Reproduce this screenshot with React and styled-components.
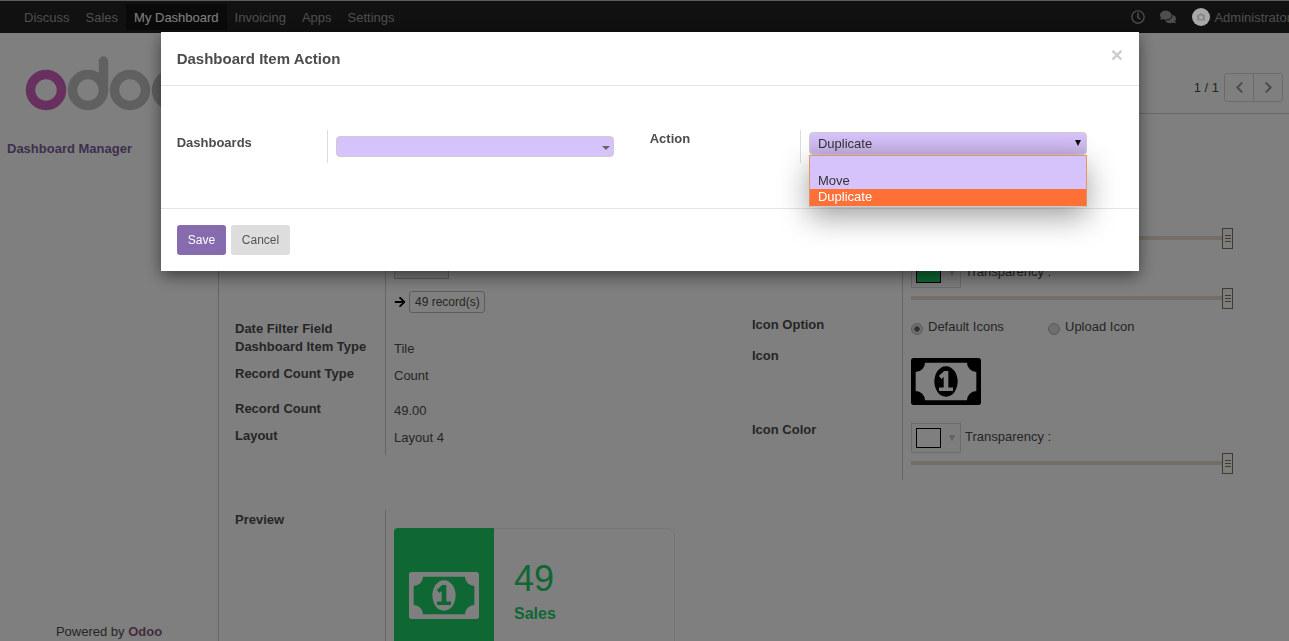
import styled, { createGlobalStyle } from "styled-components"
import { FaArrowRight, FaChevronLeft, FaChevronRight, FaComments, FaRegClock } from "react-icons/fa"

const GlobalStyle = createGlobalStyle`
    html, body {
        margin: 0;
        height: 100%;
        overflow: hidden;
        background: #fff;
        font-family: "Liberation Sans", Arial, sans-serif;
        font-size: 13px;
        color: #4c4c4c;
    }
    * {
        box-sizing: border-box;
    }
`

const MONEY = "M832 1152h384v-96h-128v-448h-114l-148 137 77 80q42-37 55-57h2v288h-128v96zm512-256q0 70-21 142t-59.5 134-101.5 101-138 39-138-39-101.5-101-59.5-134-21-142 21-142 59.5-134 101.5-101 138-39 138 39 101.5 101 59.5 134 21 142zm512 256v-512q-106 0-181-75t-75-181h-1152q0 106-75 181t-181 75v512q106 0 181 75t75 181h1152q0-106 75-181t181-75zm128-832v1152q0 26-19 45t-45 19h-1792q-26 0-45-19t-19-45v-1152q0-26 19-45t45-19h1792q26 0 45 19t19 45z"

function MoneyIcon({ color }) {
    return (
        <svg width="70" height="47" viewBox="64 256 1920 1280" preserveAspectRatio="none" fill={color}>
            <path d={MONEY} />
        </svg>
    )
}

function Logo() {
    return (
        <svg width="190" height="60" viewBox="0 0 190 60">
            <circle cx="21" cy="35" r="15.5" fill="none" stroke="#d060bc" strokeWidth="9.5" />
            <g fill="none" stroke="#c0c0c0" strokeWidth="9.5" strokeLinecap="round">
                <circle cx="63" cy="35" r="15.5" />
                <path d="M78.5 35V6" />
                <circle cx="105" cy="35" r="15.5" />
                <circle cx="147" cy="35" r="15.5" />
            </g>
        </svg>
    )
}

function Slider() {
    return (
        <SliderRow>
            <SliderTrack />
            <SliderHandle>
                <i /><i /><i />
            </SliderHandle>
        </SliderRow>
    )
}

function ColorPicker({ color }) {
    return (
        <ColorRow>
            <Swatch>
                <SwatchColor $color={color} />
                <SwatchArrow>▼</SwatchArrow>
            </Swatch>
            Transparency :
        </ColorRow>
    )
}

export default function App() {
    return (
        <>
            <GlobalStyle />
            <TopNav>
                <NavMenu>
                    <NavItem>Discuss</NavItem>
                    <NavItem>Sales</NavItem>
                    <NavItem $active>My Dashboard</NavItem>
                    <NavItem>Invoicing</NavItem>
                    <NavItem>Apps</NavItem>
                    <NavItem>Settings</NavItem>
                </NavMenu>
                <NavTools>
                    <FaRegClock size={14} />
                    <FaComments size={16} />
                    <UserMenu>
                        <Avatar width="18" height="18" viewBox="0 0 18 18">
                            <circle cx="9" cy="9" r="9" fill="#a8a8a8" />
                            <path d="M5 6.5h2l1-1.2h2l1 1.2h2v6H5z" fill="#8a8a8a" />
                            <circle cx="9" cy="9.4" r="1.8" fill="#a8a8a8" />
                        </Avatar>
                        Administrator
                    </UserMenu>
                </NavTools>
            </TopNav>

            <PageBody>
                <Sidebar>
                    <LogoBox><Logo /></LogoBox>
                    <SideTitle>Dashboard Manager</SideTitle>
                    <PoweredBy>Powered by <b>Odoo</b></PoweredBy>
                </Sidebar>

                <Content>
                    <ControlPanel>
                        <PagerText>1 / 1</PagerText>
                        <PagerGroup>
                            <PagerButton><FaChevronLeft size={13} /></PagerButton>
                            <PagerButton><FaChevronRight size={13} /></PagerButton>
                        </PagerGroup>
                    </ControlPanel>

                    <Sheet>
                        <FormColumns>
                            <LeftColumn>
                                <FieldRow $height={42}>
                                    <FieldLabel />
                                    <FieldValue><GreyButton /></FieldValue>
                                </FieldRow>
                                <FieldRow $height={29}>
                                    <FieldLabel />
                                    <FieldValue $flat>
                                        <RecordLink>
                                            <FaArrowRight size={12} />
                                            <RecordBadge>49 record(s)</RecordBadge>
                                        </RecordLink>
                                    </FieldValue>
                                </FieldRow>
                                <FieldRow $height={18}>
                                    <FieldLabel>Date Filter Field</FieldLabel>
                                    <FieldValue />
                                </FieldRow>
                                <FieldRow $height={27}>
                                    <FieldLabel>Dashboard Item Type</FieldLabel>
                                    <FieldValue>Tile</FieldValue>
                                </FieldRow>
                                <FieldRow $height={35}>
                                    <FieldLabel>Record Count Type</FieldLabel>
                                    <FieldValue>Count</FieldValue>
                                </FieldRow>
                                <FieldRow $height={27}>
                                    <FieldLabel>Record Count</FieldLabel>
                                    <FieldValue>49.00</FieldValue>
                                </FieldRow>
                                <FieldRow $height={28}>
                                    <FieldLabel>Layout</FieldLabel>
                                    <FieldValue>Layout 4</FieldValue>
                                </FieldRow>
                            </LeftColumn>

                            <RightColumn>
                                <FieldRow $height={30}>
                                    <FieldLabel />
                                    <FieldValue $flat><Slider /></FieldValue>
                                </FieldRow>
                                <FieldRow $height={57}>
                                    <FieldLabel />
                                    <FieldValue $flat>
                                        <ColorPicker color="#1ece68" />
                                        <Slider />
                                    </FieldValue>
                                </FieldRow>
                                <FieldRow $height={31}>
                                    <FieldLabel>Icon Option</FieldLabel>
                                    <FieldValue $flat>
                                        <RadioGroup>
                                            <RadioOption>
                                                <RadioDot $checked />
                                                Default Icons
                                            </RadioOption>
                                            <RadioOption>
                                                <RadioDot />
                                                Upload Icon
                                            </RadioOption>
                                        </RadioGroup>
                                    </FieldValue>
                                </FieldRow>
                                <FieldRow $height={74}>
                                    <FieldLabel>Icon</FieldLabel>
                                    <FieldValue $flat>
                                        <IconBox><MoneyIcon color="#000" /></IconBox>
                                    </FieldValue>
                                </FieldRow>
                                <FieldRow $height={60}>
                                    <FieldLabel>Icon Color</FieldLabel>
                                    <FieldValue $flat>
                                        <IconColorBox>
                                            <ColorPicker color="#fff" />
                                            <Slider />
                                        </IconColorBox>
                                    </FieldValue>
                                </FieldRow>
                            </RightColumn>
                        </FormColumns>

                        <PreviewRow>
                            <PreviewLabel>Preview</PreviewLabel>
                            <PreviewValue>
                                <TileCard>
                                    <TileIcon><MoneyIcon color="#fff" /></TileIcon>
                                    <TileText>
                                        <TileNumber>49</TileNumber>
                                        <TileName>Sales</TileName>
                                    </TileText>
                                </TileCard>
                            </PreviewValue>
                        </PreviewRow>
                    </Sheet>
                </Content>
            </PageBody>

            <Backdrop />

            <Modal>
                <ModalHeader>
                    <ModalTitle>Dashboard Item Action</ModalTitle>
                    <CloseButton>×</CloseButton>
                </ModalHeader>
                <ModalBody>
                    <ModalField>
                        <ModalLabel $top={4}>Dashboards</ModalLabel>
                        <ModalDivider />
                        <DashboardSelect>
                            <SmallCaret />
                        </DashboardSelect>
                    </ModalField>
                    <ModalField>
                        <ModalLabel $top={0}>Action</ModalLabel>
                        <ModalDivider />
                        <ActionSelect>
                            Duplicate
                            <ActionCaret />
                            <OptionList>
                                <OptionItem />
                                <OptionItem>Move</OptionItem>
                                <OptionItem $selected>Duplicate</OptionItem>
                            </OptionList>
                        </ActionSelect>
                    </ModalField>
                </ModalBody>
                <ModalFooter>
                    <SaveButton>Save</SaveButton>
                    <CancelButton>Cancel</CancelButton>
                </ModalFooter>
            </Modal>
        </>
    )
}

const TopNav = styled.div`
    height: 33px;
    border-top: 1px solid #bbb;
    background: #222;
    display: flex;
    justify-content: space-between;
    align-items: center;
    padding-left: 16px;
    white-space: nowrap;
    overflow: hidden;
`
const NavMenu = styled.div`
    display: flex;
    height: 100%;
    align-items: center;
`
const NavItem = styled.div`
    display: flex;
    align-items: center;
    height: 26px;
    padding: 0 8px;
    color: ${props => (props.$active ? "#fff" : "#9d9d9d")};
    background: ${props => (props.$active ? "#141414" : "transparent")};
`
const NavTools = styled.div`
    display: flex;
    align-items: center;
    gap: 15px;
    color: #9d9d9d;
    margin-right: -2px;
`
const UserMenu = styled.div`
    display: flex;
    align-items: center;
    gap: 4px;
    margin-left: 1px;
`
const Avatar = styled.svg`
    position: relative;
    z-index: 1;
`
const PageBody = styled.div`
    display: flex;
    height: 608px;
`
const Sidebar = styled.div`
    width: 219px;
    flex: none;
    border-right: 1px solid #ccc;
    display: flex;
    flex-direction: column;
`
const LogoBox = styled.div`
    padding: 22px 0 0 25px;
    height: 90px;
`
const SideTitle = styled.div`
    margin: 18px 0 0 7px;
    font-weight: bold;
    color: #7c5e9f;
`
const PoweredBy = styled.div`
    margin-top: auto;
    padding-bottom: 2px;
    text-align: center;
    b {
        color: #875a7b;
    }
`
const Content = styled.div`
    flex: 1;
    min-width: 0;
`
const ControlPanel = styled.div`
    height: 81px;
    border-bottom: 1px solid #d2d2d2;
    display: flex;
    justify-content: flex-end;
    align-items: flex-start;
    gap: 5px;
    padding: 40px 6px 0 0;
`
const PagerText = styled.div`
    line-height: 29px;
    color: #4c4c4c;
`
const PagerGroup = styled.div`
    display: flex;
`
const PagerButton = styled.div`
    width: 30px;
    height: 29px;
    display: flex;
    align-items: center;
    justify-content: center;
    border: 1px solid #d8d8d8;
    color: #999;
    &:first-child {
        border-radius: 3px 0 0 3px;
    }
    &:last-child {
        margin-left: -1px;
        border-radius: 0 3px 3px 0;
    }
`
const Sheet = styled.div`
    padding: 114px 0 0 16px;
`
const FormColumns = styled.div`
    display: grid;
    grid-template-columns: 517px 1fr;
    align-items: start;
`
const LeftColumn = styled.div`
    margin-top: 21px;
`
const FieldRow = styled.div`
    display: grid;
    grid-template-columns: 151px 1fr;
    height: ${props => props.$height}px;
`
const FieldLabel = styled.div`
    border-right: 1px solid #ccc;
    font-weight: bold;
    line-height: 18px;
    color: #4c4c4c;
`
const RightColumn = styled.div`
    ${FieldLabel} {
        padding-top: 1px;
    }
`
const FieldValue = styled.div`
    padding: ${props => (props.$flat ? "0" : "2px")} 0 0 8px;
    line-height: 18px;
    min-width: 0;
`
const GreyButton = styled.div`
    width: 55px;
    height: 30px;
    margin-top: -2px;
    background: #f0f0f0;
    border: 1px solid #bbb;
`
const RecordLink = styled.div`
    display: flex;
    align-items: center;
    gap: 3px;
    color: #000;
`
const RecordBadge = styled.div`
    height: 22px;
    padding: 0 4px 0 5px;
    line-height: 20px;
    font-size: 12px;
    border: 1px solid #bbb;
    border-radius: 3px;
    color: #4c4c4c;
`
const SliderRow = styled.div`
    display: flex;
    align-items: flex-start;
    width: 322px;
`
const SliderTrack = styled.div`
    flex: 1;
    height: 4px;
    margin-top: 8px;
    background: #e6dccf;
`
const SliderHandle = styled.div`
    width: 11px;
    height: 21px;
    border: 1px solid #7d7468;
    background: #fdfaf5;
    display: flex;
    flex-direction: column;
    justify-content: center;
    align-items: center;
    gap: 2px;
    i {
        display: block;
        width: 6px;
        height: 1px;
        background: #7d7468;
    }
`
const ColorRow = styled.div`
    display: flex;
    align-items: flex-start;
    gap: 4px;
    height: 30px;
    line-height: 28px;
`
const Swatch = styled.div`
    width: 50px;
    height: 30px;
    border: 1px solid #d8d8d8;
    background: #fafafa;
    padding: 4px;
    display: flex;
    align-items: center;
    gap: 6px;
`
const SwatchColor = styled.div`
    width: 25px;
    height: 20px;
    flex: none;
    border: 1px solid #000;
    background: ${props => props.$color};
`
const SwatchArrow = styled.span`
    font-size: 10px;
    line-height: 1;
    color: #c4c4c4;
`
const RadioGroup = styled.div`
    display: flex;
    line-height: 20px;
    padding-top: 2px;
`
const RadioOption = styled.div`
    display: flex;
    flex: none;
    width: 137px;
    gap: 5px;
    white-space: nowrap;
`
const RadioDot = styled.span`
    width: 12px;
    height: 12px;
    flex: none;
    margin-top: 6px;
    border-radius: 50%;
    border: 1px solid #b4b4b4;
    background: ${props => (props.$checked ? "radial-gradient(circle, #666 0 2.4px, #ddd 3px)" : "#ddd")};
`
const IconBox = styled.div`
    padding-top: 12px;
    line-height: 0;
`
const IconColorBox = styled.div`
    padding-top: 3px;
`
const PreviewRow = styled.div`
    display: grid;
    grid-template-columns: 151px 1fr;
    margin-top: 30px;
`
const PreviewLabel = styled(FieldLabel)`
    padding-top: 1px;
`
const PreviewValue = styled.div`
    padding: 18px 0 0 8px;
`
const TileCard = styled.div`
    display: flex;
    width: 281px;
    height: 132px;
    border: 1px solid #ececec;
    border-radius: 4px 8px 8px 4px;
`
const TileIcon = styled.div`
    width: 100px;
    background: #1ece68;
    display: flex;
    justify-content: center;
    padding-top: 44px;
    margin: -1px 0 -1px -1px;
    border-radius: 4px 0 0 4px;
`
const TileText = styled.div`
    padding: 30px 0 0 20px;
    color: #1ece68;
`
const TileNumber = styled.div`
    font-size: 36px;
    line-height: 40px;
`
const TileName = styled.div`
    margin-top: 5px;
    font-size: 16px;
    font-weight: bold;
    line-height: 20px;
`
const Backdrop = styled.div`
    position: fixed;
    inset: 0;
    background: rgba(0, 0, 0, 0.5);
`
const Modal = styled.div`
    position: fixed;
    top: 32px;
    left: 161px;
    width: 978px;
    height: 239px;
    background: #fff;
    box-shadow: 0 5px 15px rgba(0, 0, 0, 0.5);
    display: flex;
    flex-direction: column;
    z-index: 2;
`
const ModalHeader = styled.div`
    height: 54px;
    padding: 0 16px 0 15.7px;
    flex: none;
    border-bottom: 1px solid #e5e5e5;
    display: flex;
    justify-content: space-between;
    align-items: center;
`
const ModalTitle = styled.div`
    font-size: 15px;
    font-weight: bold;
    color: #4c4c4c;
`
const CloseButton = styled.div`
    font-size: 21px;
    font-weight: bold;
    line-height: 1;
    color: #ccc;
    margin-top: -8px;
`
const ModalBody = styled.div`
    flex: 1;
    display: grid;
    grid-template-columns: 473px 1fr;
    padding: 44px 0 0 15.7px;
`
const ModalField = styled.div`
    display: flex;
    align-items: flex-start;
    height: 33px;
`
const ModalLabel = styled.div`
    width: 150.3px;
    flex: none;
    font-weight: bold;
    line-height: 18px;
    padding-top: ${props => props.$top}px;
`
const ModalDivider = styled.div`
    width: 1px;
    height: 33px;
    flex: none;
    background: #ddd;
`
const DashboardSelect = styled.div`
    position: relative;
    width: 278px;
    height: 21px;
    margin: 6px 0 0 8px;
    border: 1px solid #ccc;
    border-radius: 4px;
    background: #d6c3fb;
`
const SmallCaret = styled.span`
    position: absolute;
    right: 3px;
    top: 9px;
    border: 4px solid transparent;
    border-top-color: #666;
    border-bottom: 0;
`
const ActionSelect = styled.div`
    position: relative;
    width: 278px;
    height: 23px;
    margin: 2px 0 0 8px;
    padding-left: 8px;
    line-height: 22px;
    border: 1px solid #ccc;
    border-radius: 4px;
    background: linear-gradient(#d8c4fd, #c6b2e6);
    color: #333;
`
const ActionCaret = styled.span`
    position: absolute;
    right: 5px;
    top: 7px;
    border-style: solid;
    border-width: 6px 3.5px 0;
    border-color: #111 transparent transparent;
`
const OptionList = styled.div`
    position: absolute;
    top: 22px;
    left: -1px;
    width: 278px;
    height: 52px;
    background: #d6c3fb;
    border: 1px solid #e0946c;
    border-bottom-color: #ccc;
    box-shadow: 0 10px 30px rgba(0, 0, 0, 0.38);
`
const OptionItem = styled.div`
    height: ${props => (props.$selected ? "17px" : "16.5px")};
    line-height: 16px;
    padding-left: 8px;
    color: ${props => (props.$selected ? "#fff" : "#333")};
    background: ${props => (props.$selected ? "#ff7037" : "transparent")};
`
const ModalFooter = styled.div`
    height: 63px;
    flex: none;
    border-top: 1px solid #e5e5e5;
    padding: 16px 16px 0;
    display: flex;
    align-items: flex-start;
    gap: 5px;
`
const SaveButton = styled.div`
    width: 49px;
    height: 30px;
    text-align: center;
    line-height: 30px;
    font-size: 12px;
    border-radius: 3px;
    color: #fff;
    background: #866baf;
`
const CancelButton = styled(SaveButton)`
    width: 59px;
    color: #555;
    background: #ddd;
`
